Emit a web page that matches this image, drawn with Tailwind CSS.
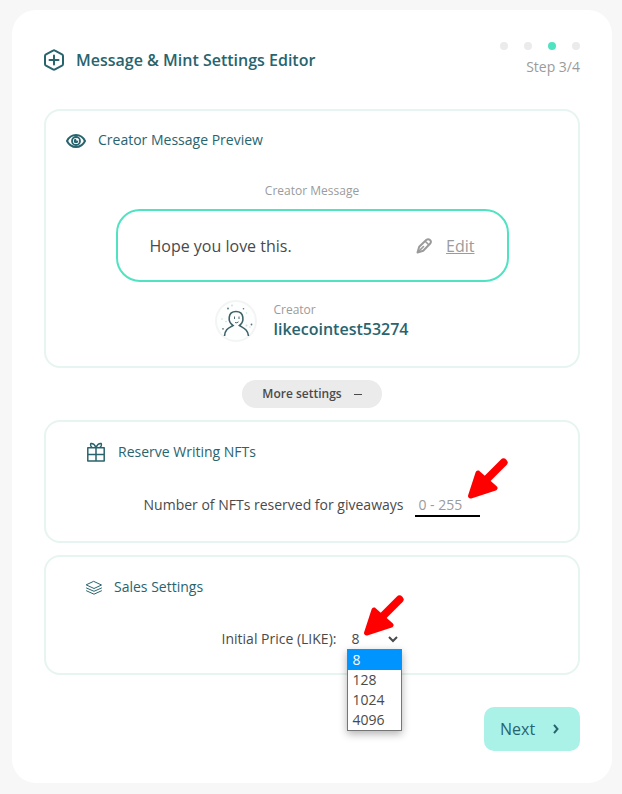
<!DOCTYPE html>
<html lang="en">
<head>
<meta charset="utf-8">
<meta name="viewport" content="width=device-width, initial-scale=1">
<title>Message &amp; Mint Settings Editor</title>
<script src="https://cdn.jsdelivr.net/npm/@tailwindcss/browser@4"></script>
</head>
<body class="min-h-screen bg-[#f7f7f7] pt-[10px] pr-[10px] pb-[11px] pl-3 font-['Open_Sans','Noto_Sans',sans-serif] text-sm text-[#4a4a4a]">
<main class="rounded-3xl bg-white p-8">
  <header class="mb-[31px] flex items-center justify-between">
    <div class="flex items-center gap-3 text-[#28646e]">
      <svg class="h-[22px] w-5" viewBox="0 0 20 22" fill="none" stroke="currentColor" stroke-width="2" stroke-linejoin="round" stroke-linecap="round" aria-hidden="true"><path d="M9 1.6Q10 1 11 1.6L18 5.4Q19 6 19 7V15Q19 16 18 16.6L11 20.4Q10 21 9 20.4L2 16.6Q1 16 1 15V7Q1 6 2 5.4Z"/><path d="M10 6.5V15.5M5.5 11H14.500"/></svg>
      <h1 class="text-base font-semibold">Message &amp; Mint Settings Editor</h1>
    </div>
    <div class="flex flex-col items-end gap-1.5">
      <div class="flex gap-4">
        <span class="size-2 rounded-full bg-[#ebebeb]"></span>
        <span class="size-2 rounded-full bg-[#ebebeb]"></span>
        <span class="size-2 rounded-full bg-[#50e3c2]"></span>
        <span class="size-2 rounded-full bg-[#ebebeb]"></span>
      </div>
      <p class="leading-[22px] text-[#9b9b9b]">Step 3/4</p>
    </div>
  </header>

  <section class="rounded-2xl border-2 border-[#e6f4f2] px-5 pt-[19px] pb-6">
    <h2 class="flex items-center gap-3 leading-5 text-[#28646e]">
      <svg class="mt-0.5 h-[14px] w-5" viewBox="0 0 20 14" fill="none" stroke="currentColor" aria-hidden="true"><path stroke-width="2" d="M1 7C3 3 6.200 1 10 1S17 3 19 7C17 11 13.800 13 10 13S3 11 1 7Z"/><circle cx="10" cy="7" r="4" stroke-width="1.800"/><circle cx="10" cy="7" r="2.300" fill="currentColor" stroke="none"/><circle cx="11.300" cy="5.600" r="1.200" fill="#fff" stroke="none"/></svg>
      Creator Message Preview
    </h2>
    <p class="mt-[33px] text-center text-xs leading-4 text-[#9b9b9b]">Creator Message</p>
    <div class="mx-auto mt-[10px] flex h-[73px] max-w-[393px] items-center justify-between rounded-3xl border-2 border-[#50e3c2] px-8 text-base">
      <p>Hope you love this.</p>
      <a href="#" class="flex items-center gap-[14px] text-[#9b9b9b]">
        <svg class="size-4" viewBox="0 0 16 16" fill="none" stroke="currentColor" stroke-width="2" stroke-linejoin="round" stroke-linecap="round" aria-hidden="true"><path d="M1.500 14.500L3.200 8.800 10.200 2Q12.200.5 14 2T14 5.800L7.200 12.800Z"/><path d="M2 14L7.500 8.500M9.500 3.500L12.500 6.500" stroke-width="1.600"/></svg>
        <span class="underline">Edit</span>
      </a>
    </div>
    <div class="mt-[18px] flex items-center justify-center gap-4">
      <svg class="size-[42px]" viewBox="0 0 42 42" fill="none" aria-hidden="true">
        <circle cx="21" cy="21" r="20" fill="#fdfefe" stroke="#f3f4f4" stroke-width="2"/>
        <path d="M9.500 36C10 29 14 28 18 25.500C12.500 22 12.500 11.500 21 11.500S29.500 22 24.500 25.500C28.500 28 33 29.500 33.500 36" stroke="#3d6268" stroke-width="1.600"/>
        <path d="M19.500 16.500V19M24 16.500V19M20 22.500Q22 23.500 23.500 21.800" stroke="#4a6b70"/>
        <g fill="#5c7679"><circle cx="13" cy="8.500" r=".9"/><circle cx="28.500" cy="8.800" r=".8"/><circle cx="36.500" cy="24.500" r=".9"/><circle cx="8" cy="28.800" r=".9"/></g>
        <g fill="#cbdedd"><circle cx="17" cy="5.500" r=".9"/><circle cx="31.500" cy="13" r=".8"/><circle cx="7" cy="19" r=".8"/><circle cx="11" cy="21.500" r=".8"/><circle cx="31.500" cy="25.500" r=".9"/><circle cx="35" cy="27" r=".7"/></g>
      </svg>
      <div>
        <p class="text-xs leading-4 text-[#9b9b9b]">Creator</p>
        <p class="text-base leading-[22px] font-semibold text-[#28646e]">likecointest53274</p>
      </div>
    </div>
  </section>

  <div class="my-3 flex justify-center">
    <button type="button" class="flex h-7 items-center gap-3 rounded-full bg-[#ebebeb] px-5 text-xs font-semibold">
      More settings
      <svg class="h-2 w-2" viewBox="0 0 8 8" stroke="currentColor" aria-hidden="true"><path d="M0 4.500H8"/></svg>
    </button>
  </div>

  <section class="rounded-2xl border-2 border-[#e6f4f2] px-10 pt-5 pb-6">
    <h2 class="flex items-center gap-3 leading-5 text-[#28646e]">
      <svg class="size-5" viewBox="0 0 20 20" fill="none" stroke="currentColor" stroke-width="1.500" stroke-linejoin="round" stroke-linecap="round" aria-hidden="true"><path d="M1.800 5.800H18.200V19H1.800ZM10 5.500V19M2 12.500H18"/><path d="M10 5.300C8.500 2.200 6.500 1.200 4.800 1.500C4.200 3 5 4.800 6 5.300M10 5.300C11.500 2.200 13.500 1.200 15.200 1.500C15.800 3 15 4.800 14 5.300"/></svg>
      Reserve Writing NFTs
    </h2>
    <div class="mt-[31px] flex items-center justify-center gap-3">
      <label for="reserve">Number of NFTs reserved for giveaways</label>
      <div class="relative">
        <input id="reserve" type="text" inputmode="numeric" placeholder="0 - 255" class="block h-6 w-[65px] border-b-2 border-black px-[3px] leading-5 outline-none placeholder:text-[#9b9b9b]">
        <svg class="pointer-events-none absolute -top-[35px] left-[52px] h-[41px] w-[41px]" viewBox="0 0 41 41" fill="#f00" aria-hidden="true"><path d="M36.500 4.500L20 21" stroke="#f00" stroke-width="8" stroke-linecap="round"/><path d="M11 15L28 30L3.500 38Z" stroke="#f00" stroke-width="5" stroke-linejoin="round"/></svg>
      </div>
    </div>
  </section>

  <section class="mt-3 rounded-2xl border-2 border-[#e6f4f2] px-10 pt-5 pb-6">
    <h2 class="flex items-center gap-3 leading-5 text-[#28646e]">
      <svg class="size-4" viewBox="0 0 16 16" fill="none" stroke="currentColor" stroke-linejoin="round" stroke-linecap="round" aria-hidden="true"><path d="M8 2.500L15.500 6L8 9.500L.5 6ZM.5 9L8 12.300L15.500 9M.5 11.800L8 15.200L15.500 11.800"/></svg>
      Sales Settings
    </h2>
    <div class="mt-8 flex items-center justify-center gap-[11px]">
      <label for="price" class="leading-5">Initial Price (LIKE):</label>
      <div class="relative">
        <select id="price" class="block h-5 w-[55px] appearance-none bg-transparent pl-1 leading-5 outline-none">
          <option selected>8</option>
          <option>128</option>
          <option>1024</option>
          <option>4096</option>
        </select>
        <svg class="pointer-events-none absolute top-[6px] right-1 h-2 w-[10px]" viewBox="0 0 10 8" fill="none" stroke="currentColor" stroke-width="2" aria-hidden="true"><path d="M1 2L5 6L9 2"/></svg>
        <ul role="listbox" aria-label="Initial Price (LIKE)" class="absolute top-5 left-0 z-10 w-full border border-[#767676] bg-white leading-5 shadow-[0_3px_8px_rgba(0,0,0,0.3)]">
          <li role="option" aria-selected="true" class="bg-[#0094ff] pl-1 text-white">8</li>
          <li role="option" aria-selected="false" class="pl-1">128</li>
          <li role="option" aria-selected="false" class="pl-1">1024</li>
          <li role="option" aria-selected="false" class="pl-1">4096</li>
        </ul>
        <svg class="pointer-events-none absolute -top-[34px] left-4 z-20 h-[41px] w-[41px]" viewBox="0 0 41 41" fill="#f00" aria-hidden="true"><path d="M36.500 4.500L20 21" stroke="#f00" stroke-width="8" stroke-linecap="round"/><path d="M11 15L28 30L3.500 38Z" stroke="#f00" stroke-width="5" stroke-linejoin="round"/></svg>
      </div>
    </div>
  </section>

  <div class="mt-8 flex justify-end">
    <button type="button" class="flex h-11 w-24 items-center justify-between rounded-[10px] bg-[#aaf1e7] pr-5 pl-4 text-base text-[#28646e]">
      Next
      <svg class="h-[10px] w-2" viewBox="0 0 8 10" fill="none" stroke="currentColor" stroke-width="2" aria-hidden="true"><path d="M2 .8L5.500 5L2 9.200"/></svg>
    </button>
  </div>
</main>
</body>
</html>
